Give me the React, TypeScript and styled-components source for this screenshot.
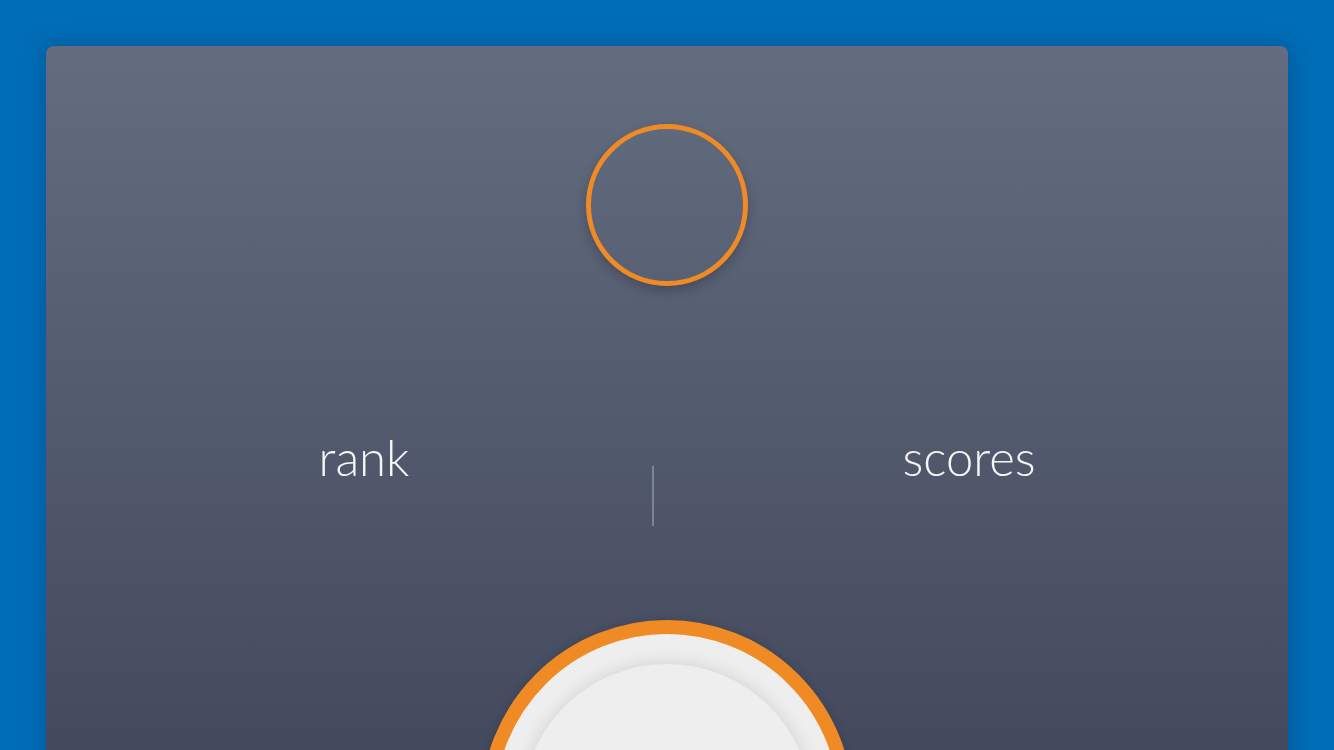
import React from "react";
import styled, { createGlobalStyle } from "styled-components";

const Global = createGlobalStyle`
  html, body {
    margin: 0;
    padding: 0;
    height: 100%;
    overflow: hidden;
    background: #006db7;
    font-family: Lato, "Open Sans", sans-serif;
  }
  #root {
    padding: 46px 46px 0;
    box-sizing: border-box;
  }
`;

const Card = styled.main`
  width: 1242px;
  height: 820px;
  border-radius: 8px;
  background: linear-gradient(to bottom, #646c80 0px, #434a5d 704px, #40475a 820px);
  box-shadow: 0 0 22px rgba(0, 40, 80, 0.35);
  display: flex;
  flex-direction: column;
  align-items: center;
  padding-top: 78px;
  box-sizing: border-box;
  overflow: hidden;
  & > * {
    flex-shrink: 0;
  }
`;

const Avatar = styled.div`
  width: 162px;
  height: 162px;
  box-sizing: border-box;
  border-radius: 50%;
  border: 5px solid #f08a25;
  box-shadow: 0 5px 12px rgba(0, 0, 0, 0.22);
`;

const Stats = styled.section`
  width: 100%;
  box-sizing: border-box;
  margin-top: 142px;
  padding: 0 4px 0 30px;
  display: grid;
  grid-template-columns: 576px 2px 1fr;
`;

const Stat = styled.div`
  text-align: center;
  color: #f6f6f8;
  font-family: Lato, sans-serif;
  font-weight: 300;
  font-size: 49px;
  line-height: 58px;
`;

const Divider = styled.div`
  width: 2px;
  height: 60px;
  margin-top: 38px;
  background: #7c8497;
`;

const Button = styled.div`
  margin-top: 94px;
  width: 372px;
  height: 372px;
  box-sizing: border-box;
  border-radius: 50%;
  border: 14px solid #f08a25;
  background: #eeeeee;
  display: flex;
  justify-content: center;
  padding-top: 30px;
  box-shadow: 0 0 10px rgba(0, 0, 0, 0.15);
`;

const Inner = styled.div`
  width: 290px;
  height: 290px;
  border-radius: 50%;
  background: #eeeeee;
  box-shadow: 0 0 18px rgba(0, 0, 0, 0.13);
`;

export default function App() {
  return (
    <>
      <Global />
      <Card>
        <Avatar />
        <Stats>
          <Stat>rank</Stat>
          <Divider />
          <Stat>scores</Stat>
        </Stats>
        <Button>
          <Inner />
        </Button>
      </Card>
    </>
  );
}
